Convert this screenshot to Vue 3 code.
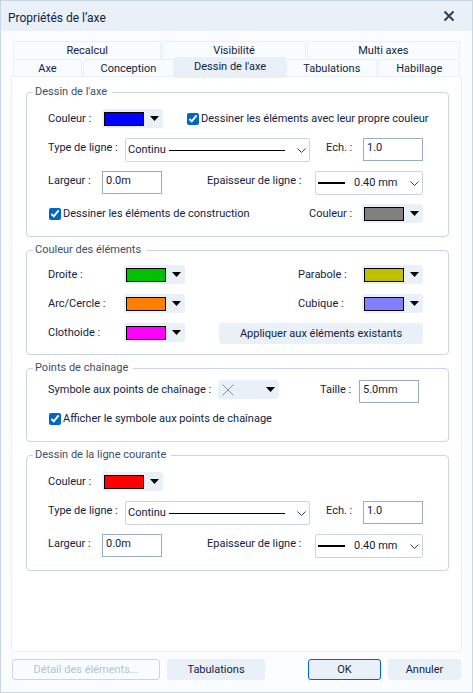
<template>
  <main class="dialog">
    <header class="title-bar">
      <h1>Propriétés de l’axe</h1>
      <button class="close" type="button" aria-label="Fermer">
        <svg width="12" height="12" viewBox="0 0 12 12"><path d="M1.5 1.5l9 9M10.5 1.5l-9 9" /></svg>
      </button>
    </header>

    <div class="tabs" role="tablist">
      <div v-for="(row, r) in tabRows" :key="r" class="tab-row">
        <button
          v-for="tab in row"
          :key="tab.name"
          type="button"
          role="tab"
          class="tab"
          :class="{ active: tab.name === activeTab }"
          :aria-selected="tab.name === activeTab"
          :style="{ flexGrow: tab.size }"
          @click="activeTab = tab.name"
        >{{ tab.name }}</button>
      </div>
    </div>

    <section class="panel" role="tabpanel">
      <fieldset>
        <legend>Dessin de l'axe</legend>
        <div class="row">
          <label class="short" for="axe-couleur">Couleur :</label>
          <button id="axe-couleur" class="color" type="button">
            <span class="swatch" :style="{ background: '#0000ff' }"></span>
            <svg class="arrow" width="9" height="5" viewBox="0 0 9 5"><path d="M0 0h9L4.5 5z" /></svg>
          </button>
          <label class="check push-check"><input v-model="ownColor" type="checkbox" />Dessiner les éléments avec leur propre couleur</label>
        </div>
        <div class="row">
          <label class="medium" for="axe-type">Type de ligne :</label>
          <div class="combo line-type">
            <select id="axe-type"><option>Continu</option></select>
            <span class="sample"></span>
            <svg class="chevron" width="9" height="6" viewBox="0 0 9 6"><path d="M0.5 0.5l4 4 4-4" /></svg>
          </div>
          <label class="scale" for="axe-ech">Ech. :</label>
          <input id="axe-ech" v-model="axis.scale" type="text" />
        </div>
        <div class="row">
          <label class="short" for="axe-largeur">Largeur :</label>
          <input id="axe-largeur" v-model="axis.width" type="text" />
          <label class="thickness" for="axe-epaisseur">Epaisseur de ligne :</label>
          <div class="combo weight">
            <select id="axe-epaisseur"><option>0.40 mm</option></select>
            <span class="sample"></span>
            <svg class="chevron" width="9" height="6" viewBox="0 0 9 6"><path d="M0.5 0.5l4 4 4-4" /></svg>
          </div>
        </div>
        <div class="row">
          <label class="check"><input v-model="construction" type="checkbox" />Dessiner les éléments de construction</label>
          <label class="right-short" for="axe-construction">Couleur :</label>
          <button id="axe-construction" class="color" type="button">
            <span class="swatch" :style="{ background: '#808080' }"></span>
            <svg class="arrow" width="9" height="5" viewBox="0 0 9 5"><path d="M0 0h9L4.5 5z" /></svg>
          </button>
        </div>
      </fieldset>

      <fieldset class="elements">
        <legend>Couleur des éléments</legend>
        <div v-for="(row, r) in elementRows" :key="r" class="row">
          <template v-for="(item, i) in row" :key="item.id">
            <label :class="i ? 'right-wide' : 'medium'" :for="item.id">{{ item.label }} :</label>
            <button :id="item.id" class="color" type="button">
              <span class="swatch" :style="{ background: item.color }"></span>
              <svg class="arrow" width="9" height="5" viewBox="0 0 9 5"><path d="M0 0h9L4.5 5z" /></svg>
            </button>
          </template>
          <button v-if="row.length === 1" class="btn apply" type="button">Appliquer aux éléments existants</button>
        </div>
      </fieldset>

      <fieldset class="points">
        <legend>Points de chaînage</legend>
        <div class="row">
          <label class="symbol-label" for="symbole">Symbole aux points de chaînage :</label>
          <button id="symbole" class="color" type="button">
            <svg class="cross" width="12" height="12" viewBox="0 0 12 12"><path d="M0.5 0.5l11 11M11.5 0.5l-11 11" /></svg>
            <svg class="arrow" width="9" height="5" viewBox="0 0 9 5"><path d="M0 0h9L4.5 5z" /></svg>
          </button>
          <label class="size" for="taille">Taille :</label>
          <input id="taille" v-model="symbolSize" type="text" />
        </div>
        <div class="row">
          <label class="check"><input v-model="showSymbol" type="checkbox" />Afficher le symbole aux points de chaînage</label>
        </div>
      </fieldset>

      <fieldset>
        <legend>Dessin de la ligne courante</legend>
        <div class="row">
          <label class="short" for="ligne-couleur">Couleur :</label>
          <button id="ligne-couleur" class="color" type="button">
            <span class="swatch" :style="{ background: '#ff0000' }"></span>
            <svg class="arrow" width="9" height="5" viewBox="0 0 9 5"><path d="M0 0h9L4.5 5z" /></svg>
          </button>
        </div>
        <div class="row">
          <label class="medium" for="ligne-type">Type de ligne :</label>
          <div class="combo line-type">
            <select id="ligne-type"><option>Continu</option></select>
            <span class="sample"></span>
            <svg class="chevron" width="9" height="6" viewBox="0 0 9 6"><path d="M0.5 0.5l4 4 4-4" /></svg>
          </div>
          <label class="scale" for="ligne-ech">Ech. :</label>
          <input id="ligne-ech" v-model="current.scale" type="text" />
        </div>
        <div class="row">
          <label class="short" for="ligne-largeur">Largeur :</label>
          <input id="ligne-largeur" v-model="current.width" type="text" />
          <label class="thickness" for="ligne-epaisseur">Epaisseur de ligne :</label>
          <div class="combo weight">
            <select id="ligne-epaisseur"><option>0.40 mm</option></select>
            <span class="sample"></span>
            <svg class="chevron" width="9" height="6" viewBox="0 0 9 6"><path d="M0.5 0.5l4 4 4-4" /></svg>
          </div>
        </div>
      </fieldset>
    </section>

    <footer class="actions">
      <button class="btn detail" type="button" disabled>Détail des éléments...</button>
      <button class="btn tabulations" type="button">Tabulations</button>
      <button class="btn ok" type="button">OK</button>
      <button class="btn cancel" type="button">Annuler</button>
    </footer>
  </main>
</template>

<script setup>
import { ref, reactive } from 'vue'

const activeTab = ref("Dessin de l'axe")

// size is the share of the row that each tab takes
const tabRows = [
  [
    { name: 'Recalcul', size: 148 },
    { name: 'Visibilité', size: 143 },
    { name: 'Multi axes', size: 153 }
  ],
  [
    { name: 'Axe', size: 68 },
    { name: 'Conception', size: 91 },
    { name: "Dessin de l'axe", size: 112 },
    { name: 'Tabulations', size: 91 },
    { name: 'Habillage', size: 81 }
  ]
]

const elementRows = [
  [
    { id: 'droite', label: 'Droite', color: '#00c000' },
    { id: 'parabole', label: 'Parabole', color: '#c0c000' }
  ],
  [
    { id: 'arc', label: 'Arc/Cercle', color: '#ff8000' },
    { id: 'cubique', label: 'Cubique', color: '#8080ff' }
  ],
  [
    { id: 'clothoide', label: 'Clothoide', color: '#ff00ff' }
  ]
]

const ownColor = ref(true)
const construction = ref(true)
const showSymbol = ref(true)
const symbolSize = ref('5.0mm')
const axis = reactive({ scale: '1.0', width: '0.0m' })
const current = reactive({ scale: '1.0', width: '0.0m' })
</script>

<style>
body {
  background: #fafcff;
}
</style>

<style scoped>
.dialog {
  display: flex;
  flex-direction: column;
  box-sizing: border-box;
  min-height: 100vh;
  border: 1px solid #c8d6e5;
  background: #fafcff;
  color: #12233d;
  font: 11px/14px Roboto, "Liberation Sans", sans-serif;
}

button,
input,
select {
  box-sizing: border-box;
  margin: 0;
  color: inherit;
  font: inherit;
}

button {
  padding: 0;
  border: 0;
}

/* Title bar */
.title-bar {
  display: flex;
  align-items: center;
  justify-content: space-between;
  height: 30px;
  padding: 0 17px 0 7px;
  background: #e9f0f8;
}

h1 {
  margin: 4px 0 0;
  font-size: 12px;
  font-weight: normal;
}

.close {
  display: flex;
  background: none;
}

.close path {
  fill: none;
  stroke: #2b4054;
  stroke-width: 2;
}

/* Tabs */
.tabs {
  padding: 10px 12px 0;
}

.tab-row {
  display: flex;
  gap: 1px;
  height: 18px;
}

.tab {
  flex: 1 1 0;
  height: 18px;
  border: 1px solid #e9f0f8;
  border-bottom: 0;
  border-radius: 3px 3px 0 0;
  background: #f9fcff;
}

.tab.active {
  position: relative;
  height: 21px;
  margin: -2px -1px 0;
  padding-bottom: 3px;
  background: #e9f0f8;
}

/* Panel and groups */
.panel {
  display: flex;
  flex: 1;
  flex-direction: column;
  gap: 6px;
  margin: -1px 10px 0;
  padding: 8px 12px 8px 14px;
  border: 1px solid #e9f0f8;
  border-radius: 0 0 3px 3px;
  background: #fff;
}

fieldset {
  display: flex;
  flex-direction: column;
  gap: 9px;
  min-width: 0;
  margin: 0;
  padding: 10px 25px 12px 21px;
  border: 1px solid #c8d6e5;
  border-radius: 4px;
}

.elements {
  padding-top: 8px;
  padding-bottom: 10px;
}

.points {
  gap: 6px;
  padding-top: 5px;
  padding-right: 29px;
}

legend {
  margin-left: -15px;
  padding: 0 5px 0 2px;
  color: #3d4f68;
}

.row {
  display: flex;
  align-items: flex-start;
}

.row > label {
  flex: none;
  line-height: 20px;
}

.short {
  width: 54px;
}

.medium {
  width: 77px;
}

.elements .medium {
  width: 76px;
}

.scale {
  width: 37px;
  margin-left: 16px;
}

.thickness {
  width: 108px;
  margin-left: auto;
}

.right-short {
  width: 53px;
  margin-left: auto;
}

.right-wide {
  width: 64px;
  margin-left: auto;
}

.symbol-label {
  width: 170px;
}

.size {
  width: 39px;
  margin-left: auto;
}

.check {
  display: flex;
  align-items: center;
  gap: 2px;
}

.push-check {
  margin-left: 23px;
}

input[type="checkbox"] {
  width: 12px;
  height: 12px;
  margin: 0 0 0 1px;
  accent-color: #0067c0;
}

input[type="text"] {
  width: 60px;
  height: 23px;
  padding: 0 3px 4px;
  border: 1px solid #9badc0;
  background: #fff;
}

.color {
  display: flex;
  flex: none;
  align-items: center;
  justify-content: space-between;
  width: 61px;
  height: 19px;
  padding: 0 4px 0 2px;
  border-radius: 3px;
  background: #e9f0f8;
}

.swatch {
  box-sizing: border-box;
  width: 40px;
  height: 14px;
  border: 1px solid #000;
}

.cross {
  margin-left: 2px;
}

.cross path {
  fill: none;
  stroke: #8493a3;
}

/* Drop-downs with a drawn line sample */
.combo {
  position: relative;
}

.line-type {
  flex: 1;
}

.weight {
  width: 108px;
}

select {
  display: block;
  width: 100%;
  height: 24px;
  padding: 0 20px 0 2px;
  border: 1px solid #c8d6e5;
  border-radius: 2px;
  background: #fff;
  appearance: none;
}

.weight select {
  padding-left: 38px;
}

.sample,
.chevron {
  position: absolute;
  pointer-events: none;
}

.line-type .sample {
  top: 12px;
  right: 25px;
  left: 44px;
  height: 1px;
  background: #000;
}

.weight .sample {
  top: 11px;
  left: 3px;
  width: 27px;
  height: 2px;
  background: #000;
}

.chevron {
  top: 10px;
  right: 4px;
}

.chevron path {
  fill: none;
  stroke: #2b4054;
}

/* Push buttons */
.btn {
  height: 21px;
  border-radius: 3px;
  background: #e9f0f8;
}

.apply {
  width: 204px;
  margin-left: auto;
}

.actions {
  display: flex;
  gap: 7px;
  padding: 7px 11px 12px;
}

.detail {
  width: 148px;
  border: 1px solid #c8d6e5;
  background: #f9fcff;
  color: #b4c3d3;
}

.tabulations {
  width: 98px;
}

.ok {
  width: 73px;
  margin-left: auto;
  border: 1px solid #0067c0;
}

.cancel {
  width: 73px;
}
</style>
